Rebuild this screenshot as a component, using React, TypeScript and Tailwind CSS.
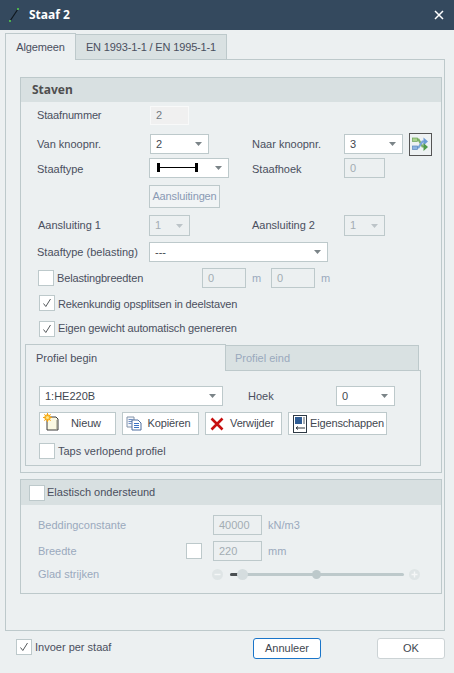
import React from "react";

const F = "font-['Liberation_Sans','Arial',sans-serif] text-[11px]";
const B = "font-['Noto_Sans','DejaVu_Sans',sans-serif] font-bold text-[12px]";
const T = "tracking-[-0.15px]";

function Caret({ c = "#7b8488" }: { c?: string }) {
  return (
    <svg width="7" height="4" viewBox="0 0 7 4" className="shrink-0">
      <path d="M0 0h7L3.5 4z" fill={c} />
    </svg>
  );
}

function Select({ w, h = 20, children, disabled, ml = 0 }: { w: number; h?: number; children?: React.ReactNode; disabled?: boolean; ml?: number }) {
  return (
    <div
      style={{ width: w, height: h, marginLeft: ml }}
      className={`flex items-center justify-between pl-[5px] pr-[6px] border shrink-0 ${disabled ? "border-[#bdc9cb] text-[#a3adb3]" : "border-[#bdc9cb] bg-white text-[#3f4750]"}`}
    >
      <span>{children}</span>
      <Caret c={disabled ? "#bcc4c8" : "#7b8488"} />
    </div>
  );
}

function Input({ w, h = 20, children, bg }: { w: number; h?: number; children?: React.ReactNode; bg?: boolean }) {
  return (
    <div
      style={{ width: w, height: h }}
      className={`flex items-center pl-[5px] border shrink-0 ${bg ? "bg-[#f0f0f0] border-[#f8f9f9] text-[#727a80]" : "border-[#bdc9cb] text-[#a3adb3]"}`}
    >
      {children}
    </div>
  );
}

function Check({ checked }: { checked?: boolean }) {
  return (
    <div className="w-[16px] h-[16px] border border-[#bdc9cb] bg-white shrink-0 flex items-center justify-center">
      {checked && (
        <svg width="10" height="10" viewBox="0 0 10 10">
          <path d="M1.5 5.5 3.8 8.5 8.5 1" fill="none" stroke="#55595c" strokeWidth="1" />
        </svg>
      )}
    </div>
  );
}

function Label({ w, children, dim, ml = 0, tight }: { w: number; children: React.ReactNode; dim?: boolean; ml?: number; tight?: boolean }) {
  return (
    <div style={{ width: w, marginLeft: ml }} className={`shrink-0 whitespace-nowrap ${tight ? T : ""} ${dim ? "text-[#9aa9bd]" : "text-[#4a4f5e]"}`}>
      {children}
    </div>
  );
}

function Btn({ w, icon, children, center }: { w: number; icon: React.ReactNode; children: React.ReactNode; center?: boolean }) {
  return (
    <div style={{ width: w }} className={`h-[23px] bg-white border border-[#bdc9cb] flex items-center text-[#3f4750] shrink-0 pl-[2px] ${T} ${center ? "pr-[3px]" : ""}`}>
      <div className="w-[18px] shrink-0 flex items-center justify-center">{icon}</div>
      <div className={center ? "flex-1 text-center" : "ml-[1px]"}>{children}</div>
    </div>
  );
}

const NewIcon = (
  <svg width="17" height="18" viewBox="0 0 17 18" className="-mt-1">
    <path d="M4 4h9l2 2v11H4z" fill="#fbf8e2" stroke="#3a3a3a" strokeWidth="1" />
    <path d="M14 7v9" stroke="#8a8a7a" />
    <circle cx="4.5" cy="4.5" r="3.2" fill="#f6bb2a" />
    <path d="M4.5 0v9M0 4.5h9M1.3 1.3l6.4 6.4M7.7 1.3 1.3 7.7" stroke="#f5a21b" strokeWidth="1" />
    <circle cx="4.5" cy="4.5" r="1.6" fill="#fde68a" />
  </svg>
);

const CopyIcon = (
  <svg width="16" height="15" viewBox="0 0 16 15">
    <path d="M1 1h7v10H1z" fill="#f3f6fa" stroke="#8292a8" />
    <path d="M2.5 3.5h4M2.5 5.5h4M2.5 7.5h3" stroke="#6f8fc4" />
    <path d="M6 4h6l3 3v7H6z" fill="#fff" stroke="#4e6f9f" />
    <path d="M8 7.5h5M8 9.5h5M8 11.5h5" stroke="#3b73c4" />
  </svg>
);

const DelIcon = (
  <svg width="14" height="14" viewBox="0 0 14 14">
    <path d="M1.5 1.5 12.5 12.5M12.5 1.5 1.5 12.5" stroke="#c70f0f" strokeWidth="2.6" />
  </svg>
);

const PropIcon = (
  <svg width="14" height="18" viewBox="0 0 14 18">
    <rect x="0.5" y="0.5" width="13" height="17" fill="#fff" stroke="#2e3a45" />
    <rect x="2" y="2" width="7" height="7" fill="#2f5c94" />
    <rect x="10" y="2" width="2" height="7" fill="#a8adb2" />
    <path d="M3 13h9M3 13l2-1.5M3 13l2 1.5" stroke="#30363c" strokeWidth="1" fill="none" />
  </svg>
);

const SwapIcon = (
  <svg width="17" height="15" viewBox="0 0 17 15">
    <path d="M4 2.5h2.5l4 7h2" fill="none" stroke="#7fb069" strokeWidth="2.2" />
    <path d="M4 10.5h2.5l4-6h2" fill="none" stroke="#7aa5d8" strokeWidth="2.2" />
    <path d="M11.5 0.5l4.5 4-4.5 4z" fill="#6b9bd6" />
    <path d="M11.5 6l4.5 4-4.5 4z" fill="#4f9a4a" />
    <rect x="0.5" y="9" width="5" height="3.5" fill="#8db4e2" stroke="#5b88bd" strokeWidth="0.7" />
    <rect x="0.5" y="1" width="5" height="3.4" fill="#a9d28f" stroke="#6aa455" strokeWidth="0.7" />
  </svg>
);

const BeamIcon = (
  <svg width="42" height="12" viewBox="0 0 42 12">
    <rect x="0" y="1" width="3" height="9" fill="#000" />
    <rect x="38" y="1" width="3" height="9" fill="#000" />
    <rect x="2" y="5" width="37" height="1" fill="#000" />
  </svg>
);

export default function App() {
  return (
    <div className={`w-[454px] h-[673px] bg-[#ecf0f1] overflow-hidden flex flex-col ${F}`}>
      {/* title */}
      <div className="h-[30px] bg-[#34495e] flex items-center shrink-0 pl-[9px] pr-[10px] text-white">
        <svg width="10" height="14" viewBox="0 0 10 14">
          <path d="M1 13 9 1" stroke="#10181f" strokeWidth="1.2" />
          <rect x="0" y="12" width="2" height="2" fill="#4caf50" />
          <rect x="8" y="0" width="2" height="2" fill="#4caf50" />
        </svg>
        <div className={`ml-[10px] flex-1 ${B}`}>Staaf 2</div>
        <svg width="10" height="10" viewBox="0 0 10 10">
          <path d="M1 1 9 9M9 1 1 9" stroke="#fff" strokeWidth="1.5" />
        </svg>
      </div>

      {/* tabs */}
      <div className="flex items-end h-[30px] pl-[5px] shrink-0 -mb-px relative z-10">
        <div className={`w-[71px] h-[27px] bg-[#ecf0f1] border border-[#bdc9cb] border-b-0 flex items-center justify-center text-[#4a4f5e] ${T}`}>Algemeen</div>
        <div className={`w-[151px] h-[26px] bg-[#d9e1e2] border border-l-0 border-[#bdc9cb] flex items-center justify-center text-[#4a4f5e] ${T}`}>EN 1993-1-1 / EN 1995-1-1</div>
      </div>

      {/* main panel */}
      <div className="mx-[5px] w-[440px] h-[572px] border border-[#bdc9cb] pt-[17px] pl-[14px] shrink-0">
        {/* Staven */}
        <div className="w-[422px] h-[396px] border border-[#bdc9cb] flex flex-col">
          <div className={`h-[24px] bg-[#d8e0e1] flex items-center pl-[11px] text-[#4f4f4f] shrink-0 ${B}`}>Staven</div>
          <div className="pl-[16px]">
            <div className="flex items-center h-[19px] mt-[4px]">
              <Label w={113} tight>Staafnummer</Label>
              <Input w={39} h={19} bg>2</Input>
            </div>
            <div className="flex items-center h-[24px] mt-[7px]">
              <Label w={113}>Van knoopnr.</Label>
              <Select w={59}>2</Select>
              <Label w={92} ml={43}>Naar knoopnr.</Label>
              <Select w={59}>3</Select>
              <div className="ml-[6px] w-[23px] h-[23px] border border-[#555] bg-[#eef2f3] flex items-center justify-center shrink-0">{SwapIcon}</div>
            </div>
            <div className="flex items-center h-[20px] mt-[2px]">
              <Label w={112}><span className="relative top-px">Staaftype</span></Label>
              <div className="w-[80px] h-[20px] bg-white border border-[#bdc9cb] flex items-center justify-between pl-[7px] pr-[6px] shrink-0">
                {BeamIcon}
                <Caret />
              </div>
              <Label w={92} ml={23}><span className="relative top-px">Staafhoek</span></Label>
              <Input w={41} h={20}>0</Input>
            </div>
            <div className={`ml-[112px] mt-[7px] w-[71px] h-[23px] bg-[#f1f4f5] border border-[#bdc9cb] flex items-center justify-center text-[#8a9ab4] ${T}`}>Aansluitingen</div>
            <div className="flex items-center h-[21px] mt-[7px]">
              <Label w={111} ml={1}>Aansluiting 1</Label>
              <Select w={41} h={21} disabled>1</Select>
              <Label w={92} ml={62}>Aansluiting 2</Label>
              <Select w={41} h={21} disabled>1</Select>
            </div>
            <div className="flex items-center h-[20px] mt-[6px]">
              <Label w={112}>Staaftype (belasting)</Label>
              <Select w={179}>---</Select>
            </div>
            <div className="flex items-center h-[20px] mt-[6px]">
              <div className="ml-[1px]"><Check /></div>
              <Label w={145} ml={3} tight>Belastingbreedten</Label>
              <Input w={44}>0</Input>
              <Label w={19} ml={6} dim>m</Label>
              <Input w={44}>0</Input>
              <Label w={10} ml={6} dim>m</Label>
            </div>
            <div className="flex items-center h-[16px] mt-[7px] ml-[2px]">
              <Check checked />
              <Label w={300} ml={3} tight><span className="relative top-px">Rekenkundig opsplitsen in deelstaven</span></Label>
            </div>
            <div className="flex items-center h-[17px] mt-[9px] ml-[2px]">
              <Check checked />
              <Label w={300} ml={3} tight>Eigen gewicht automatisch genereren</Label>
            </div>
            {/* subtabs */}
            <div className="flex items-end h-[27px] mt-[7px] -ml-[12px] -mb-px relative z-10">
              <div className="w-[201px] h-[27px] bg-[#ecf0f1] border border-[#bdc9cb] border-b-0 flex items-center pl-[10px] text-[#4a4f5e]">Profiel begin</div>
              <div className="w-[193px] h-[26px] bg-[#d9e1e2] border border-l-0 border-[#bdc9cb] flex items-center pl-[9px] text-[#9aa9bd]">Profiel eind</div>
            </div>
            <div className="-ml-[12px] w-[396px] h-[96px] border border-[#bdc9cb] pl-[13px]">
              <div className="flex items-center h-[20px] mt-[15px]">
                <Select w={184}>1:HE220B</Select>
                <Label w={88} ml={25}>Hoek</Label>
                <Select w={59}>0</Select>
              </div>
              <div className="flex items-center gap-[6px] mt-[6px]">
                <Btn w={77} icon={NewIcon} center>Nieuw</Btn>
                <Btn w={77} icon={CopyIcon} center>Kopiëren</Btn>
                <Btn w={77} icon={DelIcon} center>Verwijder</Btn>
                <Btn w={99} icon={PropIcon}>Eigenschappen</Btn>
              </div>
              <div className="flex items-center h-[16px] mt-[8px]">
                <Check />
                <Label w={200} ml={3}>Taps verlopend profiel</Label>
              </div>
            </div>
          </div>
        </div>

        {/* Elastisch */}
        <div className="w-[422px] h-[115px] mt-[6px] border border-[#bdc9cb]">
          <div className="h-[25px] bg-[#d8e0e1] flex items-center pl-[8px]">
            <Check />
            <Label w={200} ml={2}>Elastisch ondersteund</Label>
          </div>
          <div className="pl-[17px]">
            <div className="flex items-center h-[20px] mt-[10px]">
              <Label w={175} dim>Beddingconstante</Label>
              <Input w={49}>40000</Input>
              <Label w={40} ml={6} dim>kN/m3</Label>
            </div>
            <div className="flex items-center h-[20px] mt-[6px]">
              <Label w={148} dim>Breedte</Label>
              <Check />
              <div className="ml-[11px]"><Input w={49}>220</Input></div>
              <Label w={40} ml={6} dim>mm</Label>
            </div>
            <div className="flex items-center h-[16px] mt-[5px]">
              <Label w={174} dim>Glad strijken</Label>
              <svg width="11" height="11" viewBox="0 0 11 11" className="shrink-0">
                <circle cx="5.5" cy="5.5" r="5.5" fill="#dfe5e6" />
                <path d="M2.5 5.5h6" stroke="#f5f7f7" strokeWidth="1.4" />
              </svg>
              <div className="relative w-[174px] h-[3px] ml-[7px] bg-[#bdc9cb] rounded-full">
                <div className="absolute left-0 top-0 h-[3px] w-[9px] bg-[#4a4f52] rounded-l-full" />
                <div className="absolute left-[7px] -top-[4px] w-[11px] h-[11px] rounded-full bg-[#d5dddf]" />
                <div className="absolute left-[82px] -top-[3px] w-[9px] h-[9px] rounded-full bg-[#bdc9cb]" />
              </div>
              <svg width="11" height="11" viewBox="0 0 11 11" className="ml-[5px] shrink-0">
                <circle cx="5.5" cy="5.5" r="5.5" fill="#dfe5e6" />
                <path d="M2.5 5.5h6M5.5 2.5v6" stroke="#f5f7f7" strokeWidth="1.4" />
              </svg>
            </div>
          </div>
        </div>
      </div>

      {/* footer */}
      <div className="flex items-start h-[21px] mt-[7px] pl-[16px] shrink-0">
        <div className="flex items-center mt-[1px]">
          <Check checked />
          <Label w={218} ml={3}>Invoer per staaf</Label>
        </div>
        <div className="w-[68px] h-[21px] bg-white border border-[#1a75c9] rounded-[3px] flex items-center justify-center text-[#3f4750]">Annuleer</div>
        <div className="w-[68px] h-[21px] ml-[56px] bg-white border border-[#ccd3d5] rounded-[3px] flex items-center justify-center text-[#3f4750]">OK</div>
      </div>
    </div>
  );
}
